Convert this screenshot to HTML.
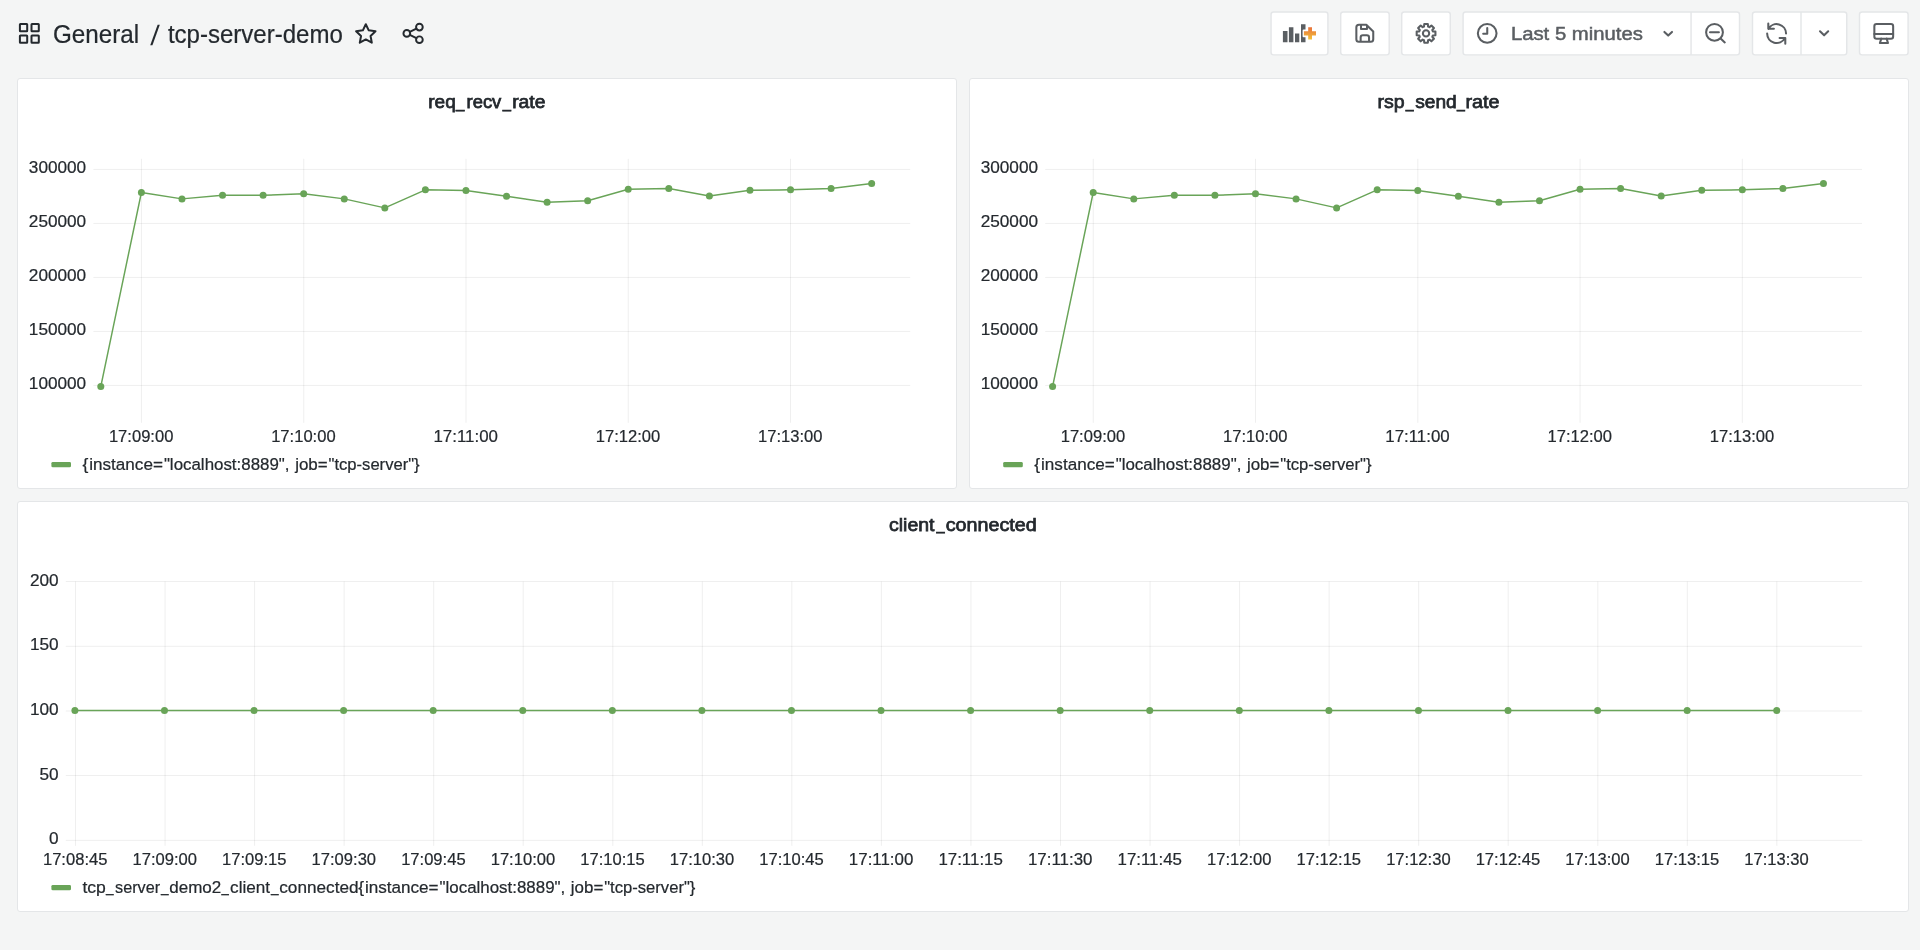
<!DOCTYPE html>
<html lang="en"><head><meta charset="utf-8"><title>tcp-server-demo - Grafana</title>
<style>
html,body{margin:0;padding:0}
body{width:1920px;height:950px;overflow:hidden;background:#f4f5f5;font-family:"Liberation Sans", sans-serif;color:#24292e;position:relative}
.toolbar{position:absolute;left:0;top:0;width:1920px;height:66px}
.panel{position:absolute;box-sizing:border-box;background:#fff;border:1px solid #e4e6e8;border-radius:3px;overflow:hidden}
.panel svg.chart{position:absolute;left:-1px;top:-1px}
svg.ov{position:absolute;left:0;top:0;pointer-events:none}
svg{will-change:transform}
text{white-space:pre}
</style></head>
<body>
<header class="toolbar">
<svg class="ov" width="1920" height="66" viewBox="0 0 1920 66" font-family='"Liberation Sans", sans-serif'>
<rect x="1271.05" y="11.95" width="56.85" height="42.9" rx="2.6" fill="#fff" stroke="#e4e6e8" stroke-width="1.45"/>
<rect x="1340.7" y="11.95" width="48.50" height="42.9" rx="2.6" fill="#fff" stroke="#e4e6e8" stroke-width="1.45"/>
<rect x="1401.7" y="11.95" width="48.60" height="42.9" rx="2.6" fill="#fff" stroke="#e4e6e8" stroke-width="1.45"/>
<rect x="1463.1" y="11.95" width="276.40" height="42.9" rx="2.6" fill="#fff" stroke="#e4e6e8" stroke-width="1.45"/><path d="M1691.05 11.95V54.85" stroke="#e4e6e8" stroke-width="1.45"/>
<rect x="1752.5" y="11.95" width="94.25" height="42.9" rx="2.6" fill="#fff" stroke="#e4e6e8" stroke-width="1.45"/><path d="M1801.0 11.95V54.85" stroke="#e4e6e8" stroke-width="1.45"/>
<rect x="1859.5" y="11.95" width="48.60" height="42.9" rx="2.6" fill="#fff" stroke="#e4e6e8" stroke-width="1.45"/>
<text x="52.97" y="42.8" font-size="25.2" fill="#24292e" textLength="86.21" lengthAdjust="spacingAndGlyphs" stroke="#24292e" stroke-width="0.22">General</text>
<text transform="translate(150.2 44.6) skewX(-5)" font-size="28" fill="#24292e">/</text>
<text x="167.91" y="42.8" font-size="25.2" fill="#24292e" textLength="174.95" lengthAdjust="spacingAndGlyphs" stroke="#24292e" stroke-width="0.22">tcp-server-demo</text>
<text x="1510.91" y="40.3" font-size="19.2" fill="#5a5e62" textLength="131.97" lengthAdjust="spacingAndGlyphs" stroke="#5a5e62" stroke-width="0.5">Last 5 minutes</text>
<rect x="19.9" y="24.05" width="7.3" height="7.2" rx="0.5" fill="none" stroke="#24292e" stroke-width="2"/>
<rect x="31.5" y="24.05" width="7.3" height="7.2" rx="0.5" fill="none" stroke="#24292e" stroke-width="2"/>
<rect x="19.9" y="35.5" width="7.3" height="7.2" rx="0.5" fill="none" stroke="#24292e" stroke-width="2"/>
<rect x="31.5" y="35.5" width="7.3" height="7.2" rx="0.5" fill="none" stroke="#24292e" stroke-width="2"/>
<path d="M365.80 24.20L368.74 30.35L375.50 31.25L370.56 35.95L371.80 42.65L365.80 39.40L359.80 42.65L361.04 35.95L356.10 31.25L362.86 30.35Z" fill="none" stroke="#24292e" stroke-width="2" stroke-linejoin="round"/>
<path d="M409.8 31.9L416.4 28.6M409.8 34.9L416.4 38.2" fill="none" stroke="#24292e" stroke-width="2" stroke-linejoin="round" stroke-linecap="round"/>
<circle cx="419.4" cy="27.1" r="3.35" fill="none" stroke="#24292e" stroke-width="1.95"/>
<circle cx="406.8" cy="33.4" r="3.35" fill="none" stroke="#24292e" stroke-width="1.95"/>
<circle cx="419.4" cy="39.7" r="3.35" fill="none" stroke="#24292e" stroke-width="1.95"/>
<defs><linearGradient id="pg" x1="0" y1="0" x2="0" y2="1"><stop offset="0" stop-color="#e8703a"/><stop offset="1" stop-color="#f3c23a"/></linearGradient></defs>
<path d="M1282.9 31H1287.5V42.2H1282.9ZM1288.9 27.2H1293.4V42.2H1288.9ZM1295 33.5H1299.3V42.2H1295ZM1301 24.3H1305.5V29.6H1303.6Q1302.6 29.6 1302.6 30.6V36.2Q1302.6 37.2 1303.6 37.2H1305.5V42.2H1301Z" fill="#5a5e62"/>
<path d="M1308.2 27.2H1312V31.2H1316V35.5H1312V39.6H1308.2V35.5H1303.9V31.2H1308.2Z" fill="url(#pg)"/>
<path d="M1359.3 24.75H1366.3L1373.25 31.6V39.2Q1373.25 41.75 1370.7 41.75H1358.9Q1356.35 41.75 1356.35 39.2V27.3Q1356.35 24.75 1358.9 24.75ZM1361 24.75V28.9H1367V25.2M1360.65 41.75V37.5Q1360.65 35.25 1362.9 35.25H1366.8Q1369.05 35.25 1369.05 37.5V41.75" fill="none" stroke="#5a5e62" stroke-width="2.05" stroke-linejoin="round" stroke-linecap="round"/>
<path d="M1424.02 26.60L1424.25 24.02L1427.85 24.02L1428.08 26.60L1429.43 27.15L1431.41 25.49L1433.96 28.04L1432.30 30.02L1432.85 31.37L1435.43 31.60L1435.43 35.20L1432.85 35.43L1432.30 36.78L1433.96 38.76L1431.41 41.31L1429.43 39.65L1428.08 40.20L1427.85 42.78L1424.25 42.78L1424.02 40.20L1422.67 39.65L1420.69 41.31L1418.14 38.76L1419.80 36.78L1419.25 35.43L1416.67 35.20L1416.67 31.60L1419.25 31.37L1419.80 30.02L1418.14 28.04L1420.69 25.49L1422.67 27.15Z" fill="none" stroke="#5a5e62" stroke-width="2.05" stroke-linejoin="round" stroke-linecap="round"/>
<circle cx="1426.05" cy="33.4" r="3.15" fill="none" stroke="#5a5e62" stroke-width="2.05" stroke-linejoin="round" stroke-linecap="round"/>
<circle cx="1487.2" cy="33.3" r="9.35" fill="none" stroke="#5a5e62" stroke-width="2.05" stroke-linejoin="round" stroke-linecap="round"/>
<path d="M1487.25 28V33.7H1483.2" fill="none" stroke="#5a5e62" stroke-width="2.05" stroke-linejoin="round" stroke-linecap="round"/>
<path d="M1664.4 31.9L1668.2 35.6L1672 31.9" fill="none" stroke="#5a5e62" stroke-width="2.05" stroke-linejoin="round" stroke-linecap="round"/>
<circle cx="1714.5" cy="32.3" r="8.4" fill="none" stroke="#5a5e62" stroke-width="2.05" stroke-linejoin="round" stroke-linecap="round"/>
<path d="M1710 32.3H1718.9M1720.6 38.4L1724.8 42.4" fill="none" stroke="#5a5e62" stroke-width="2.05" stroke-linejoin="round" stroke-linecap="round"/>
<path d="M1768.42 28.88A9.45 9.45 0 0 1 1786.05 33.60M1768.3 23.4V28.7H1773.9" fill="none" stroke="#5a5e62" stroke-width="2.05" stroke-linejoin="round" stroke-linecap="round"/>
<path d="M1784.78 38.33A9.45 9.45 0 0 1 1767.15 33.60M1785.3 43.8V38H1779.6" fill="none" stroke="#5a5e62" stroke-width="2.05" stroke-linejoin="round" stroke-linecap="round"/>
<path d="M1820 31.3L1824.1 35.3L1828.2 31.3" fill="none" stroke="#5a5e62" stroke-width="2.05" stroke-linejoin="round" stroke-linecap="round"/>
<rect x="1874.35" y="23.95" width="18.8" height="14.7" rx="2.2" fill="none" stroke="#5a5e62" stroke-width="2.05" stroke-linejoin="round" stroke-linecap="round"/>
<path d="M1874.35 33.9H1893.15M1881.3 38.65L1879.9 43H1888L1886.6 38.65" fill="none" stroke="#5a5e62" stroke-width="2.05" stroke-linejoin="round" stroke-linecap="round"/>
</svg>
</header>
<main>
<section class="panel" style="left:17px;top:78px;width:940px;height:411px">
<svg class="chart" width="940" height="411" viewBox="17 78 940 411" font-family='"Liberation Sans", sans-serif'>
<text x="428.29" y="108.2" font-size="19.0" fill="#24292e" textLength="27.51" lengthAdjust="spacingAndGlyphs" stroke="#24292e" stroke-width="0.75">req</text><text x="456.11" y="106.6" font-size="19.0" fill="#24292e" textLength="8.38" lengthAdjust="spacingAndGlyphs" stroke="#24292e" stroke-width="0.75">_</text><text x="466.52" y="108.2" font-size="19.0" fill="#24292e" textLength="34.8" lengthAdjust="spacingAndGlyphs" stroke="#24292e" stroke-width="0.75">recv</text><text x="502.81" y="106.6" font-size="19.0" fill="#24292e" textLength="8.2" lengthAdjust="spacingAndGlyphs" stroke="#24292e" stroke-width="0.75">_</text><text x="512.17" y="108.2" font-size="19.0" fill="#24292e" textLength="33.34" lengthAdjust="spacingAndGlyphs" stroke="#24292e" stroke-width="0.75">rate</text>
<path d="M93.40 169.45H910.20M93.40 223.45H910.20M93.40 277.45H910.20M93.40 331.45H910.20M93.40 385.45H910.20" stroke="#24292e" stroke-opacity="0.075" stroke-width="1" fill="none"/>
<path d="M141.45 158.8V422.80M303.72 158.8V422.80M465.99 158.8V422.80M628.26 158.8V422.80M790.53 158.8V422.80" stroke="#24292e" stroke-opacity="0.075" stroke-width="1" fill="none"/>
<text x="86.2" y="173.45" font-size="17.2" fill="#24292e" text-anchor="end" stroke="#24292e" stroke-width="0.22">300000</text>
<text x="86.2" y="227.45" font-size="17.2" fill="#24292e" text-anchor="end" stroke="#24292e" stroke-width="0.22">250000</text>
<text x="86.2" y="281.45" font-size="17.2" fill="#24292e" text-anchor="end" stroke="#24292e" stroke-width="0.22">200000</text>
<text x="86.2" y="335.45" font-size="17.2" fill="#24292e" text-anchor="end" stroke="#24292e" stroke-width="0.22">150000</text>
<text x="86.2" y="389.45" font-size="17.2" fill="#24292e" text-anchor="end" stroke="#24292e" stroke-width="0.22">100000</text>
<text x="108.89999999999999" y="442.2" font-size="17.2" fill="#24292e" textLength="64.5" lengthAdjust="spacingAndGlyphs" stroke="#24292e" stroke-width="0.22">17:09:00</text>
<text x="271.17" y="442.2" font-size="17.2" fill="#24292e" textLength="64.5" lengthAdjust="spacingAndGlyphs" stroke="#24292e" stroke-width="0.22">17:10:00</text>
<text x="433.44" y="442.2" font-size="17.2" fill="#24292e" textLength="64.5" lengthAdjust="spacingAndGlyphs" stroke="#24292e" stroke-width="0.22">17:11:00</text>
<text x="595.7099999999999" y="442.2" font-size="17.2" fill="#24292e" textLength="64.5" lengthAdjust="spacingAndGlyphs" stroke="#24292e" stroke-width="0.22">17:12:00</text>
<text x="757.9799999999999" y="442.2" font-size="17.2" fill="#24292e" textLength="64.5" lengthAdjust="spacingAndGlyphs" stroke="#24292e" stroke-width="0.22">17:13:00</text>
<path d="M100.80 386.50L141.40 192.50L181.97 198.90L222.54 195.30L263.11 195.30L303.68 193.80L344.25 198.90L384.82 207.90L425.39 189.80L465.96 190.50L506.53 196.30L547.10 202.30L587.67 200.70L628.24 189.30L668.81 188.50L709.38 196.00L749.95 190.30L790.52 189.80L831.09 188.50L871.66 183.50" stroke="#69a458" stroke-width="1.45" fill="none" stroke-linejoin="round"/>
<circle cx="100.80" cy="386.50" r="3.5" fill="#69a458"/>
<circle cx="141.40" cy="192.50" r="3.5" fill="#69a458"/>
<circle cx="181.97" cy="198.90" r="3.5" fill="#69a458"/>
<circle cx="222.54" cy="195.30" r="3.5" fill="#69a458"/>
<circle cx="263.11" cy="195.30" r="3.5" fill="#69a458"/>
<circle cx="303.68" cy="193.80" r="3.5" fill="#69a458"/>
<circle cx="344.25" cy="198.90" r="3.5" fill="#69a458"/>
<circle cx="384.82" cy="207.90" r="3.5" fill="#69a458"/>
<circle cx="425.39" cy="189.80" r="3.5" fill="#69a458"/>
<circle cx="465.96" cy="190.50" r="3.5" fill="#69a458"/>
<circle cx="506.53" cy="196.30" r="3.5" fill="#69a458"/>
<circle cx="547.10" cy="202.30" r="3.5" fill="#69a458"/>
<circle cx="587.67" cy="200.70" r="3.5" fill="#69a458"/>
<circle cx="628.24" cy="189.30" r="3.5" fill="#69a458"/>
<circle cx="668.81" cy="188.50" r="3.5" fill="#69a458"/>
<circle cx="709.38" cy="196.00" r="3.5" fill="#69a458"/>
<circle cx="749.95" cy="190.30" r="3.5" fill="#69a458"/>
<circle cx="790.52" cy="189.80" r="3.5" fill="#69a458"/>
<circle cx="831.09" cy="188.50" r="3.5" fill="#69a458"/>
<circle cx="871.66" cy="183.50" r="3.5" fill="#69a458"/>
<rect x="51.4" y="461.9" width="19.6" height="5.4" rx="1.4" fill="#69a458"/>
<text x="82.54" y="470.0" font-size="17.2" fill="#24292e" textLength="5.86" lengthAdjust="spacingAndGlyphs" stroke="#24292e" stroke-width="0.22">{</text><text x="89.24" y="470.0" font-size="17.2" fill="#24292e" textLength="73.68" lengthAdjust="spacingAndGlyphs" stroke="#24292e" stroke-width="0.22">instance=</text><text x="163.88" y="470.0" font-size="17.2" fill="#24292e" textLength="125.67" lengthAdjust="spacingAndGlyphs" stroke="#24292e" stroke-width="0.22">&quot;localhost:8889&quot;,</text><text x="295.14" y="470.0" font-size="17.2" fill="#24292e" textLength="32.48" lengthAdjust="spacingAndGlyphs" stroke="#24292e" stroke-width="0.22">job=</text><text x="328.49" y="470.0" font-size="17.2" fill="#24292e" textLength="91.2" lengthAdjust="spacingAndGlyphs" stroke="#24292e" stroke-width="0.22">&quot;tcp-server&quot;}</text>
</svg></section>
<section class="panel" style="left:969px;top:78px;width:940px;height:411px">
<svg class="chart" width="940" height="411" viewBox="969 78 940 411" font-family='"Liberation Sans", sans-serif'>
<text x="1377.55" y="108.2" font-size="19.0" fill="#24292e" textLength="27.16" lengthAdjust="spacingAndGlyphs" stroke="#24292e" stroke-width="0.75">rsp</text><text x="1405.79" y="106.6" font-size="19.0" fill="#24292e" textLength="7.82" lengthAdjust="spacingAndGlyphs" stroke="#24292e" stroke-width="0.75">_</text><text x="1415.18" y="108.2" font-size="19.0" fill="#24292e" textLength="41.52" lengthAdjust="spacingAndGlyphs" stroke="#24292e" stroke-width="0.75">send</text><text x="1456.99" y="106.6" font-size="19.0" fill="#24292e" textLength="7.82" lengthAdjust="spacingAndGlyphs" stroke="#24292e" stroke-width="0.75">_</text><text x="1465.44" y="108.2" font-size="19.0" fill="#24292e" textLength="34.09" lengthAdjust="spacingAndGlyphs" stroke="#24292e" stroke-width="0.75">rate</text>
<path d="M1045.20 169.45H1862.00M1045.20 223.45H1862.00M1045.20 277.45H1862.00M1045.20 331.45H1862.00M1045.20 385.45H1862.00" stroke="#24292e" stroke-opacity="0.075" stroke-width="1" fill="none"/>
<path d="M1093.25 158.8V422.80M1255.52 158.8V422.80M1417.79 158.8V422.80M1580.06 158.8V422.80M1742.33 158.8V422.80" stroke="#24292e" stroke-opacity="0.075" stroke-width="1" fill="none"/>
<text x="1038.0" y="173.45" font-size="17.2" fill="#24292e" text-anchor="end" stroke="#24292e" stroke-width="0.22">300000</text>
<text x="1038.0" y="227.45" font-size="17.2" fill="#24292e" text-anchor="end" stroke="#24292e" stroke-width="0.22">250000</text>
<text x="1038.0" y="281.45" font-size="17.2" fill="#24292e" text-anchor="end" stroke="#24292e" stroke-width="0.22">200000</text>
<text x="1038.0" y="335.45" font-size="17.2" fill="#24292e" text-anchor="end" stroke="#24292e" stroke-width="0.22">150000</text>
<text x="1038.0" y="389.45" font-size="17.2" fill="#24292e" text-anchor="end" stroke="#24292e" stroke-width="0.22">100000</text>
<text x="1060.7" y="442.2" font-size="17.2" fill="#24292e" textLength="64.5" lengthAdjust="spacingAndGlyphs" stroke="#24292e" stroke-width="0.22">17:09:00</text>
<text x="1222.97" y="442.2" font-size="17.2" fill="#24292e" textLength="64.5" lengthAdjust="spacingAndGlyphs" stroke="#24292e" stroke-width="0.22">17:10:00</text>
<text x="1385.24" y="442.2" font-size="17.2" fill="#24292e" textLength="64.5" lengthAdjust="spacingAndGlyphs" stroke="#24292e" stroke-width="0.22">17:11:00</text>
<text x="1547.51" y="442.2" font-size="17.2" fill="#24292e" textLength="64.5" lengthAdjust="spacingAndGlyphs" stroke="#24292e" stroke-width="0.22">17:12:00</text>
<text x="1709.78" y="442.2" font-size="17.2" fill="#24292e" textLength="64.5" lengthAdjust="spacingAndGlyphs" stroke="#24292e" stroke-width="0.22">17:13:00</text>
<path d="M1052.60 386.50L1093.20 192.50L1133.77 198.90L1174.34 195.30L1214.91 195.30L1255.48 193.80L1296.05 198.90L1336.62 207.90L1377.19 189.80L1417.76 190.50L1458.33 196.30L1498.90 202.30L1539.47 200.70L1580.04 189.30L1620.61 188.50L1661.18 196.00L1701.75 190.30L1742.32 189.80L1782.89 188.50L1823.46 183.50" stroke="#69a458" stroke-width="1.45" fill="none" stroke-linejoin="round"/>
<circle cx="1052.60" cy="386.50" r="3.5" fill="#69a458"/>
<circle cx="1093.20" cy="192.50" r="3.5" fill="#69a458"/>
<circle cx="1133.77" cy="198.90" r="3.5" fill="#69a458"/>
<circle cx="1174.34" cy="195.30" r="3.5" fill="#69a458"/>
<circle cx="1214.91" cy="195.30" r="3.5" fill="#69a458"/>
<circle cx="1255.48" cy="193.80" r="3.5" fill="#69a458"/>
<circle cx="1296.05" cy="198.90" r="3.5" fill="#69a458"/>
<circle cx="1336.62" cy="207.90" r="3.5" fill="#69a458"/>
<circle cx="1377.19" cy="189.80" r="3.5" fill="#69a458"/>
<circle cx="1417.76" cy="190.50" r="3.5" fill="#69a458"/>
<circle cx="1458.33" cy="196.30" r="3.5" fill="#69a458"/>
<circle cx="1498.90" cy="202.30" r="3.5" fill="#69a458"/>
<circle cx="1539.47" cy="200.70" r="3.5" fill="#69a458"/>
<circle cx="1580.04" cy="189.30" r="3.5" fill="#69a458"/>
<circle cx="1620.61" cy="188.50" r="3.5" fill="#69a458"/>
<circle cx="1661.18" cy="196.00" r="3.5" fill="#69a458"/>
<circle cx="1701.75" cy="190.30" r="3.5" fill="#69a458"/>
<circle cx="1742.32" cy="189.80" r="3.5" fill="#69a458"/>
<circle cx="1782.89" cy="188.50" r="3.5" fill="#69a458"/>
<circle cx="1823.46" cy="183.50" r="3.5" fill="#69a458"/>
<rect x="1003.2" y="461.9" width="19.6" height="5.4" rx="1.4" fill="#69a458"/>
<text x="1034.34" y="470.0" font-size="17.2" fill="#24292e" textLength="5.86" lengthAdjust="spacingAndGlyphs" stroke="#24292e" stroke-width="0.22">{</text><text x="1041.04" y="470.0" font-size="17.2" fill="#24292e" textLength="73.68" lengthAdjust="spacingAndGlyphs" stroke="#24292e" stroke-width="0.22">instance=</text><text x="1115.68" y="470.0" font-size="17.2" fill="#24292e" textLength="125.67" lengthAdjust="spacingAndGlyphs" stroke="#24292e" stroke-width="0.22">&quot;localhost:8889&quot;,</text><text x="1246.94" y="470.0" font-size="17.2" fill="#24292e" textLength="32.48" lengthAdjust="spacingAndGlyphs" stroke="#24292e" stroke-width="0.22">job=</text><text x="1280.29" y="470.0" font-size="17.2" fill="#24292e" textLength="91.2" lengthAdjust="spacingAndGlyphs" stroke="#24292e" stroke-width="0.22">&quot;tcp-server&quot;}</text>
</svg></section>
<section class="panel" style="left:17px;top:501px;width:1892px;height:411px">
<svg class="chart" width="1892" height="411" viewBox="17 501 1892 411" font-family='"Liberation Sans", sans-serif'>
<text x="888.96" y="530.8" font-size="19.0" fill="#24292e" textLength="45.59" lengthAdjust="spacingAndGlyphs" stroke="#24292e" stroke-width="0.75">client</text><text x="936.4" y="529.2" font-size="19.0" fill="#24292e" textLength="8.1" lengthAdjust="spacingAndGlyphs" stroke="#24292e" stroke-width="0.75">_</text><text x="945.66" y="530.8" font-size="19.0" fill="#24292e" textLength="91.07" lengthAdjust="spacingAndGlyphs" stroke="#24292e" stroke-width="0.75">connected</text>
<path d="M65.80 581.5H1862.20M65.80 646.3H1862.20M65.80 711.0H1862.20M65.80 775.5H1862.20M65.80 840.4H1862.20" stroke="#24292e" stroke-opacity="0.075" stroke-width="1" fill="none"/>
<path d="M75.50 581.5V845.80M165.05 581.5V845.80M254.59 581.5V845.80M344.13 581.5V845.80M433.68 581.5V845.80M523.23 581.5V845.80M612.77 581.5V845.80M702.32 581.5V845.80M791.86 581.5V845.80M881.40 581.5V845.80M970.95 581.5V845.80M1060.49 581.5V845.80M1150.04 581.5V845.80M1239.59 581.5V845.80M1329.13 581.5V845.80M1418.67 581.5V845.80M1508.22 581.5V845.80M1597.77 581.5V845.80M1687.31 581.5V845.80M1776.86 581.5V845.80" stroke="#24292e" stroke-opacity="0.075" stroke-width="1" fill="none"/>
<text x="58.6" y="585.5" font-size="17.2" fill="#24292e" text-anchor="end" stroke="#24292e" stroke-width="0.22">200</text>
<text x="58.6" y="650.3" font-size="17.2" fill="#24292e" text-anchor="end" stroke="#24292e" stroke-width="0.22">150</text>
<text x="58.6" y="715.0" font-size="17.2" fill="#24292e" text-anchor="end" stroke="#24292e" stroke-width="0.22">100</text>
<text x="58.6" y="779.5" font-size="17.2" fill="#24292e" text-anchor="end" stroke="#24292e" stroke-width="0.22">50</text>
<text x="58.6" y="844.4" font-size="17.2" fill="#24292e" text-anchor="end" stroke="#24292e" stroke-width="0.22">0</text>
<text x="42.949999999999996" y="865.2" font-size="17.2" fill="#24292e" textLength="64.5" lengthAdjust="spacingAndGlyphs" stroke="#24292e" stroke-width="0.22">17:08:45</text>
<text x="132.49500000000003" y="865.2" font-size="17.2" fill="#24292e" textLength="64.5" lengthAdjust="spacingAndGlyphs" stroke="#24292e" stroke-width="0.22">17:09:00</text>
<text x="222.04000000000002" y="865.2" font-size="17.2" fill="#24292e" textLength="64.5" lengthAdjust="spacingAndGlyphs" stroke="#24292e" stroke-width="0.22">17:09:15</text>
<text x="311.585" y="865.2" font-size="17.2" fill="#24292e" textLength="64.5" lengthAdjust="spacingAndGlyphs" stroke="#24292e" stroke-width="0.22">17:09:30</text>
<text x="401.13" y="865.2" font-size="17.2" fill="#24292e" textLength="64.5" lengthAdjust="spacingAndGlyphs" stroke="#24292e" stroke-width="0.22">17:09:45</text>
<text x="490.675" y="865.2" font-size="17.2" fill="#24292e" textLength="64.5" lengthAdjust="spacingAndGlyphs" stroke="#24292e" stroke-width="0.22">17:10:00</text>
<text x="580.2199999999999" y="865.2" font-size="17.2" fill="#24292e" textLength="64.5" lengthAdjust="spacingAndGlyphs" stroke="#24292e" stroke-width="0.22">17:10:15</text>
<text x="669.765" y="865.2" font-size="17.2" fill="#24292e" textLength="64.5" lengthAdjust="spacingAndGlyphs" stroke="#24292e" stroke-width="0.22">17:10:30</text>
<text x="759.31" y="865.2" font-size="17.2" fill="#24292e" textLength="64.5" lengthAdjust="spacingAndGlyphs" stroke="#24292e" stroke-width="0.22">17:10:45</text>
<text x="848.8549999999999" y="865.2" font-size="17.2" fill="#24292e" textLength="64.5" lengthAdjust="spacingAndGlyphs" stroke="#24292e" stroke-width="0.22">17:11:00</text>
<text x="938.4" y="865.2" font-size="17.2" fill="#24292e" textLength="64.5" lengthAdjust="spacingAndGlyphs" stroke="#24292e" stroke-width="0.22">17:11:15</text>
<text x="1027.945" y="865.2" font-size="17.2" fill="#24292e" textLength="64.5" lengthAdjust="spacingAndGlyphs" stroke="#24292e" stroke-width="0.22">17:11:30</text>
<text x="1117.49" y="865.2" font-size="17.2" fill="#24292e" textLength="64.5" lengthAdjust="spacingAndGlyphs" stroke="#24292e" stroke-width="0.22">17:11:45</text>
<text x="1207.035" y="865.2" font-size="17.2" fill="#24292e" textLength="64.5" lengthAdjust="spacingAndGlyphs" stroke="#24292e" stroke-width="0.22">17:12:00</text>
<text x="1296.5800000000002" y="865.2" font-size="17.2" fill="#24292e" textLength="64.5" lengthAdjust="spacingAndGlyphs" stroke="#24292e" stroke-width="0.22">17:12:15</text>
<text x="1386.125" y="865.2" font-size="17.2" fill="#24292e" textLength="64.5" lengthAdjust="spacingAndGlyphs" stroke="#24292e" stroke-width="0.22">17:12:30</text>
<text x="1475.67" y="865.2" font-size="17.2" fill="#24292e" textLength="64.5" lengthAdjust="spacingAndGlyphs" stroke="#24292e" stroke-width="0.22">17:12:45</text>
<text x="1565.2150000000001" y="865.2" font-size="17.2" fill="#24292e" textLength="64.5" lengthAdjust="spacingAndGlyphs" stroke="#24292e" stroke-width="0.22">17:13:00</text>
<text x="1654.76" y="865.2" font-size="17.2" fill="#24292e" textLength="64.5" lengthAdjust="spacingAndGlyphs" stroke="#24292e" stroke-width="0.22">17:13:15</text>
<text x="1744.305" y="865.2" font-size="17.2" fill="#24292e" textLength="64.5" lengthAdjust="spacingAndGlyphs" stroke="#24292e" stroke-width="0.22">17:13:30</text>
<path d="M74.90 710.55L164.47 710.55L254.04 710.55L343.61 710.55L433.18 710.55L522.75 710.55L612.32 710.55L701.89 710.55L791.46 710.55L881.03 710.55L970.60 710.55L1060.17 710.55L1149.74 710.55L1239.31 710.55L1328.88 710.55L1418.45 710.55L1508.02 710.55L1597.59 710.55L1687.16 710.55L1776.73 710.55" stroke="#69a458" stroke-width="1.45" fill="none" stroke-linejoin="round"/>
<circle cx="74.90" cy="710.55" r="3.5" fill="#69a458"/>
<circle cx="164.47" cy="710.55" r="3.5" fill="#69a458"/>
<circle cx="254.04" cy="710.55" r="3.5" fill="#69a458"/>
<circle cx="343.61" cy="710.55" r="3.5" fill="#69a458"/>
<circle cx="433.18" cy="710.55" r="3.5" fill="#69a458"/>
<circle cx="522.75" cy="710.55" r="3.5" fill="#69a458"/>
<circle cx="612.32" cy="710.55" r="3.5" fill="#69a458"/>
<circle cx="701.89" cy="710.55" r="3.5" fill="#69a458"/>
<circle cx="791.46" cy="710.55" r="3.5" fill="#69a458"/>
<circle cx="881.03" cy="710.55" r="3.5" fill="#69a458"/>
<circle cx="970.60" cy="710.55" r="3.5" fill="#69a458"/>
<circle cx="1060.17" cy="710.55" r="3.5" fill="#69a458"/>
<circle cx="1149.74" cy="710.55" r="3.5" fill="#69a458"/>
<circle cx="1239.31" cy="710.55" r="3.5" fill="#69a458"/>
<circle cx="1328.88" cy="710.55" r="3.5" fill="#69a458"/>
<circle cx="1418.45" cy="710.55" r="3.5" fill="#69a458"/>
<circle cx="1508.02" cy="710.55" r="3.5" fill="#69a458"/>
<circle cx="1597.59" cy="710.55" r="3.5" fill="#69a458"/>
<circle cx="1687.16" cy="710.55" r="3.5" fill="#69a458"/>
<circle cx="1776.73" cy="710.55" r="3.5" fill="#69a458"/>
<rect x="51.4" y="884.9" width="19.6" height="5.4" rx="1.4" fill="#69a458"/>
<text x="82.41" y="893.0" font-size="17.2" fill="#24292e" textLength="23.39" lengthAdjust="spacingAndGlyphs" stroke="#24292e" stroke-width="0.22">tcp</text><text x="106.02" y="891.5" font-size="17.2" fill="#24292e" textLength="7.57" lengthAdjust="spacingAndGlyphs" stroke="#24292e" stroke-width="0.22">_</text><text x="115.06" y="893.0" font-size="17.2" fill="#24292e" textLength="45.11" lengthAdjust="spacingAndGlyphs" stroke="#24292e" stroke-width="0.22">server</text><text x="161.02" y="891.5" font-size="17.2" fill="#24292e" textLength="7.57" lengthAdjust="spacingAndGlyphs" stroke="#24292e" stroke-width="0.22">_</text><text x="169.28" y="893.0" font-size="17.2" fill="#24292e" textLength="52.0" lengthAdjust="spacingAndGlyphs" stroke="#24292e" stroke-width="0.22">demo2</text><text x="221.61" y="891.5" font-size="17.2" fill="#24292e" textLength="7.29" lengthAdjust="spacingAndGlyphs" stroke="#24292e" stroke-width="0.22">_</text><text x="230.08" y="893.0" font-size="17.2" fill="#24292e" textLength="39.96" lengthAdjust="spacingAndGlyphs" stroke="#24292e" stroke-width="0.22">client</text><text x="271.02" y="891.5" font-size="17.2" fill="#24292e" textLength="7.57" lengthAdjust="spacingAndGlyphs" stroke="#24292e" stroke-width="0.22">_</text><text x="279.27" y="893.0" font-size="17.2" fill="#24292e" textLength="79.28" lengthAdjust="spacingAndGlyphs" stroke="#24292e" stroke-width="0.22">connected</text><text x="358.24" y="893.0" font-size="17.2" fill="#24292e" textLength="5.86" lengthAdjust="spacingAndGlyphs" stroke="#24292e" stroke-width="0.22">{</text><text x="364.94" y="893.0" font-size="17.2" fill="#24292e" textLength="73.68" lengthAdjust="spacingAndGlyphs" stroke="#24292e" stroke-width="0.22">instance=</text><text x="439.58" y="893.0" font-size="17.2" fill="#24292e" textLength="125.67" lengthAdjust="spacingAndGlyphs" stroke="#24292e" stroke-width="0.22">&quot;localhost:8889&quot;,</text><text x="570.84" y="893.0" font-size="17.2" fill="#24292e" textLength="32.48" lengthAdjust="spacingAndGlyphs" stroke="#24292e" stroke-width="0.22">job=</text><text x="604.19" y="893.0" font-size="17.2" fill="#24292e" textLength="91.2" lengthAdjust="spacingAndGlyphs" stroke="#24292e" stroke-width="0.22">&quot;tcp-server&quot;}</text>
</svg></section>
</main>
</body></html>
